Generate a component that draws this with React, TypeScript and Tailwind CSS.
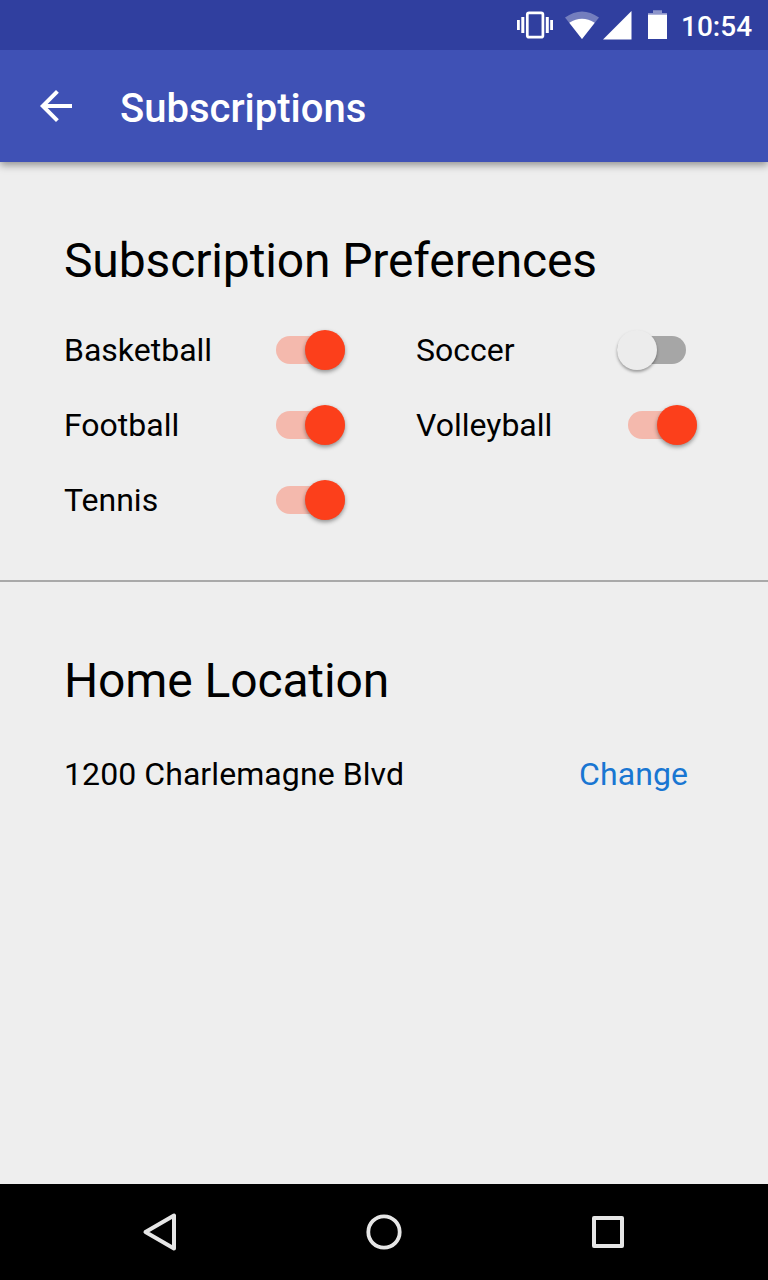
import React from "react";

function StatusBar() {
  return (
    <div className="relative z-10 flex h-[50px] shrink-0 items-center bg-[#303f9f] text-white">
      <svg className="ml-auto h-[50px] w-[174px]" viewBox="0 0 174 50" fill="#fff">
        <rect x="19.3" y="12.8" width="15.6" height="24.4" rx="1.8" fill="none" stroke="#fff" strokeWidth="2.7" />
        <rect x="9" y="20" width="2.8" height="10" />
        <rect x="13.3" y="17" width="3" height="16" />
        <rect x="37.8" y="17" width="3" height="16" />
        <rect x="42.2" y="20" width="2.8" height="10" />
        <path d="M74 39 L57 17.5 Q74 5.500 91 17.500 Z" opacity=".33" />
        <path d="M74 39 L61.300 22.800 Q74 14.500 86.700 22.800 Z" />
        <path d="M95 39.400 L123.500 11 V39.400 Z" />
        <path d="M140 14.500 V39 H159 V14.500 Z" />
        <path d="M140 14.500 V13 H145 V10.200 H154 V13 H159 V14.500 Z" opacity=".45" />
      </svg>
      <span className="mr-[17px] -ml-px w-[70px] pt-[3px] text-[28px] leading-[50px] font-medium whitespace-nowrap">
        10:54
      </span>
    </div>
  );
}

function Toggle({ on }: { on: boolean }) {
  return (
    <span
      role="switch"
      aria-checked={on}
      className={
        on
          ? "flex h-7 w-[69px] items-center justify-end rounded-full bg-[#f4b9ad]"
          : "flex h-7 w-[69px] items-center justify-start rounded-full bg-[#a6a6a6]"
      }
    >
      <span
        className={
          on
            ? "size-10 shrink-0 rounded-full bg-[#fc3f1b] shadow-[0_2px_4px_rgba(0,0,0,0.4)]"
            : "size-10 shrink-0 rounded-full bg-[#ececec] shadow-[0_2px_3px_rgba(0,0,0,0.35)]"
        }
      />
    </span>
  );
}

function Preference({ label, on }: { label: string; on: boolean }) {
  return (
    <div className="flex h-[75px] w-[352px] items-center">
      <span className={on ? "w-[212px]" : "w-[201px]"}>{label}</span>
      <Toggle on={on} />
    </div>
  );
}

export default function App() {
  return (
    <div className="flex h-[1280px] w-[768px] flex-col overflow-hidden bg-[#eeeeee] font-['Roboto',sans-serif] text-black">
      <StatusBar />
      <header className="flex h-28 shrink-0 items-center bg-[#3f51b5] text-white shadow-[0_3px_8px_rgba(0,0,0,0.4)]">
        <svg className="ml-8 h-12 w-12" viewBox="0 0 24 24" fill="#fff">
          <path d="M20 11H7.830l5.590-5.590L12 4l-8 8 8 8 1.410-1.410L7.830 13H20v-2z" />
        </svg>
        <h1 className="ml-10 pt-1.5 text-[40px] leading-[48px] font-medium">Subscriptions</h1>
      </header>
      <main className="flex-1">
        <section className="h-[420px] border-b-2 border-[#a9a9a9] pt-[71px] pl-16">
          <h2 className="text-[48px] leading-[56px] tracking-[-0.13px]">Subscription Preferences</h2>
          <div className="mt-[23px] grid grid-cols-[352px_352px] text-[32px]">
            <Preference label="Basketball" on={true} />
            <Preference label="Soccer" on={false} />
            <Preference label="Football" on={true} />
            <Preference label="Volleyball" on={true} />
            <Preference label="Tennis" on={true} />
          </div>
        </section>
        <section className="px-16 pt-[71px]">
          <h2 className="text-[48px] leading-[56px] tracking-[-0.13px]">Home Location</h2>
          <div className="mt-[45px] flex justify-between pr-4 text-[32px] leading-[40px]">
            <span className="tracking-[0.08px]">1200 Charlemagne Blvd</span>
            <button className="tracking-[0.08px] text-[#1976d2]">Change</button>
          </div>
        </section>
      </main>
      <nav className="flex h-24 shrink-0 items-center justify-center bg-black">
        <svg className="h-24 w-56" viewBox="48 0 224 96" fill="none" stroke="#e6e6e6" strokeWidth="4" strokeLinejoin="round">
          <path d="M145.500 48 L174 31.500 V64.500 Z" />
        </svg>
        <svg className="h-24 w-56" viewBox="0 0 224 96" fill="none" stroke="#e6e6e6" strokeWidth="3.800">
          <circle cx="112" cy="48" r="15.700" />
        </svg>
        <svg className="h-24 w-56" viewBox="0 0 224 96" fill="none" stroke="#e6e6e6" strokeWidth="4" strokeLinejoin="round">
          <rect x="98" y="34" width="28" height="28" />
        </svg>
      </nav>
    </div>
  );
}
